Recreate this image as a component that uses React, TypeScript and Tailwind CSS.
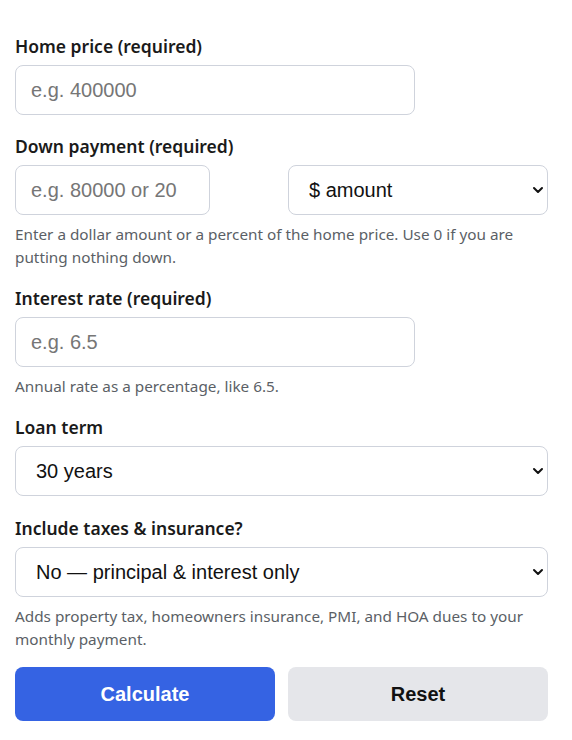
import React from 'react';

const labelCls = 'block text-[17.5px] font-semibold text-[#1a1a1a] leading-[22px] mb-[8px]';
const fieldCls =
  'h-[50px] rounded-[8px] border border-[#cfd3dc] bg-white px-[15px] text-[20px] text-[#111] placeholder:text-[#767676] outline-none';
const helpCls = 'mt-[8px] text-[15.3px] leading-[23px] text-[#5b5f66]';
const arial = { fontFamily: '"Liberation Sans", Arial, sans-serif' };

const Chevron: React.FC = () => (
  <svg
    className="pointer-events-none absolute right-[4px] top-1/2 -translate-y-1/2"
    width="12"
    height="12"
    viewBox="0 0 12 12"
    fill="none">
    <path d="M2 4l4 4 4-4" stroke="#111" strokeWidth="2" strokeLinecap="round" strokeLinejoin="round" />
  </svg>
);

interface SelectProps {
  options: string[];
}

const Select: React.FC<SelectProps> = ({ options }) => (
  <div className="relative" style={arial}>
    <select className={`${fieldCls} w-full appearance-none pl-[20px] pr-[24px]`}>
      {options.map((o) => (
        <option key={o}>{o}</option>
      ))}
    </select>
    <Chevron />
  </div>
);

export default function App() {
  return (
    <div
      className="w-[572px] min-h-[740px] bg-white px-[15px] pt-[35px]"
      style={{ fontFamily: '"Noto Sans", "Open Sans", sans-serif' }}>
      <form className="w-[533px]" onSubmit={(e) => e.preventDefault()}>
        <div className="mb-[20px]">
          <label className={labelCls}>Home price (required)</label>
          <input className={`${fieldCls} w-[400px]`} style={arial} placeholder="e.g. 400000" />
        </div>

        <div className="mb-[18px]">
          <label className={labelCls}>Down payment (required)</label>
          <div className="grid grid-cols-2 gap-[13px]">
            <input className={`${fieldCls} w-[195px]`} style={arial} placeholder="e.g. 80000 or 20" />
            <Select options={['$ amount', '% of price']} />
          </div>
          <p className={helpCls}>
            Enter a dollar amount or a percent of the home price. Use 0 if you are putting nothing down.
          </p>
        </div>

        <div className="mb-[18px]">
          <label className={labelCls}>Interest rate (required)</label>
          <input className={`${fieldCls} w-[400px]`} style={arial} placeholder="e.g. 6.5" />
          <p className={helpCls}>Annual rate as a percentage, like 6.5.</p>
        </div>

        <div className="mb-[21px]">
          <label className={labelCls}>Loan term</label>
          <Select options={['30 years', '20 years', '15 years', '10 years']} />
        </div>

        <div className="mb-[16px]">
          <label className={labelCls}>Include taxes &amp; insurance?</label>
          <Select options={['No — principal & interest only', 'Yes — include taxes & insurance']} />
          <p className={helpCls}>
            Adds property tax, homeowners insurance, PMI, and HOA dues to your monthly payment.
          </p>
        </div>

        <div className="grid grid-cols-2 gap-[13px]" style={arial}>
          <button type="submit" className="h-[54px] rounded-[8px] bg-[#3563e3] text-[20px] font-bold text-white">
            Calculate
          </button>
          <button type="button" className="h-[54px] rounded-[8px] bg-[#e5e6ea] text-[20px] font-bold text-[#111]">
            Reset
          </button>
        </div>
      </form>
    </div>
  );
}
